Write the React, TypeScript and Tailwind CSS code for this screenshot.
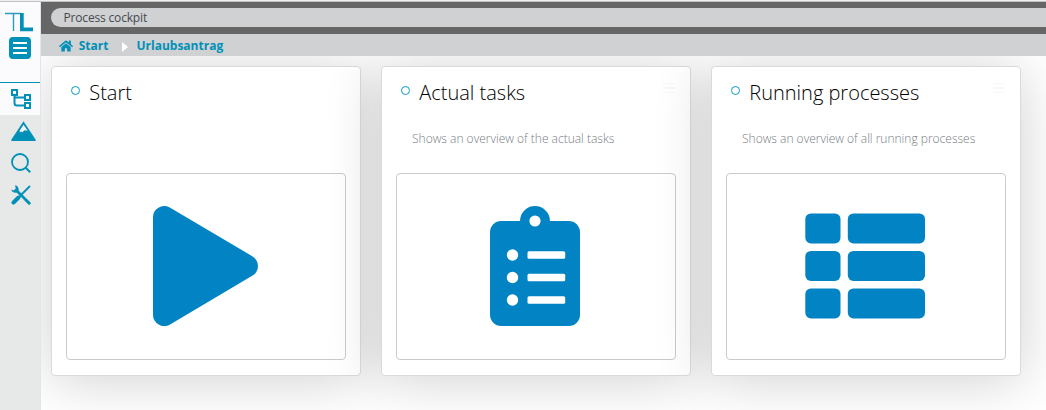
import type { ReactNode } from 'react';
import { FaHome } from 'react-icons/fa';

function Logo() {
  return (
    <svg className="h-5 w-7" viewBox="0 0 28 20">
      <path d="M0 1.5H15.5M8.5 1V19" fill="none" stroke="#2b9cbc" strokeWidth="1.4" />
      <path d="M15 1H18.7V15.5H28V19.3H15Z" fill="#0090b8" />
    </svg>
  );
}

function TreeIcon() {
  return (
    <svg className="h-5 w-[21px]" viewBox="0 0 21 20" fill="none" stroke="#0090b8" strokeWidth="2">
      <rect x="1" y="1" width="5" height="5" />
      <rect x="14" y="6" width="5" height="5" />
      <rect x="14" y="14" width="5" height="5" />
      <path d="M3.5 6V14Q3.5 16.5 6 16.5H14M3.5 8.5H14" />
    </svg>
  );
}

function MountainIcon() {
  return (
    <svg className="h-5 w-[25px]" viewBox="0 0 25 20">
      <path d="M12.5 .2L24.7 18.8Q25 20 24 20H1Q0 20 .3 18.8Z" fill="#0090b8" />
      <path d="M12.5 3.8L16.7 9.8L13.5 9.2L11 11.5L10.2 10.3L9 11.4L8.6 9.8Z" fill="#f2f5f5" />
    </svg>
  );
}

function SearchIcon() {
  return (
    <svg className="h-5 w-5" viewBox="0 0 20 20" fill="none" stroke="#0090b8" strokeWidth="1.8">
      <circle cx="9" cy="9" r="8" />
      <path d="M14.7 14.7L19.2 19.2" strokeWidth="2" />
    </svg>
  );
}

function ToolsIcon() {
  return (
    <svg className="h-5 w-5" viewBox="0 0 20 20" fill="none" stroke="#0090b8">
      <path d="M5.5 5.5L14 14" strokeWidth="2.6" />
      <path d="M14.5 14.5L18.2 18.2" strokeWidth="3" strokeLinecap="round" />
      <path d="M18.5 1.5L9 11" strokeWidth="1.8" strokeLinecap="round" />
      <path d="M7.5 12.5L2.5 17.5" strokeWidth="4" strokeLinecap="round" />
      <path d="M4 .3Q8 1 7.6 5.5L5.5 7.8Q1.2 8.2 .3 4.6L2.7 5.4L4.8 3.6Z" fill="#0090b8" stroke="none" />
    </svg>
  );
}

function PlayIcon() {
  return (
    <svg className="h-[120px] w-[105px]" viewBox="0 0 105 120" fill="#0284c4">
      <path d="M17.2 1.8A11.25 11.25 0 0 0 0 11.25V108.75A11.25 11.25 0 0 0 17.1 118.4L99.6 69.6A11.25 11.25 0 0 0 99.6 50.4Z" />
    </svg>
  );
}

function ClipboardIcon() {
  return (
    <svg className="mr-px h-[120px] w-[90px]" viewBox="0 0 90 120">
      <g fill="#0284c4">
        <rect y="15" width="90" height="105" rx="11.25" />
        <circle cx="45" cy="15" r="15" />
      </g>
      <g fill="#fff">
        <circle cx="45" cy="15" r="5.6" />
        {[49, 71.5, 94].map((y) => (
          <g key={y}>
            <circle cx="22.5" cy={y} r="5.7" />
            <rect x="37.5" y={y - 3.8} width="37.7" height="7.6" rx="1.5" />
          </g>
        ))}
      </g>
    </svg>
  );
}

function ListIcon() {
  return (
    <svg className="mr-px h-[106px] w-[120px]" viewBox="0 0 120 106" fill="#0284c4">
      {[0.4, 37.9, 75.4].map((y) => (
        <g key={y}>
          <rect x=".3" y={y} width="35.2" height="30" rx="5.6" />
          <rect x="42.8" y={y} width="77.2" height="30" rx="5.6" />
        </g>
      ))}
    </svg>
  );
}

interface CardProps {
  title: string;
  description?: string;
  menu?: boolean;
  children: ReactNode;
}

function Card({ title, description, menu, children }: CardProps) {
  return (
    <section className="flex h-[310px] w-[310px] shrink-0 flex-col rounded border border-[#dadada] bg-white px-[14px] pb-[15px] shadow-[0_4px_56px_rgba(0,0,0,0.19)]">
      <header className="flex h-[52px] items-center">
        <span className="mb-[5px] ml-[5px] mr-[9.25px] h-[9px] w-[9px] rounded-full border border-[#0b9cc4]" />
        <h2 className="text-xl font-light text-black">{title}</h2>
        {menu && (
          <span className="mb-[10px] ml-auto mr-px flex flex-col gap-[3px]">
            <i className="h-[1.5px] w-3 bg-[#f8f8f9]" />
            <i className="h-[1.5px] w-3 bg-[#f8f8f9]" />
            <i className="h-[1.5px] w-3 bg-[#f8f8f9]" />
          </span>
        )}
      </header>
      <p className="h-[54px] whitespace-nowrap pl-4 pt-[10px] text-xs leading-5 font-light text-[#777d83]">{description}</p>
      <div className="flex flex-1 items-center justify-center rounded border border-[#c9caca] pb-[2px] pr-px">{children}</div>
    </section>
  );
}

export default function App() {
  return (
    <div className="flex h-[410px] w-[1046px] flex-col overflow-hidden bg-white font-['Open_Sans','Noto_Sans',sans-serif]">
      <div className="h-[2px] shrink-0 border-b border-[#c0c4c4] bg-[#eef0f0]" />
      <div className="flex min-h-0 flex-1">
        <aside className="flex w-[41px] shrink-0 flex-col border-r border-[#e2e5e9] bg-[#e6e9e8]">
          <div className="flex h-[81px] flex-col border-b border-[#0090b8] bg-[#fbfbfe] pl-[5px] pt-[10px]">
            <Logo />
            <span className="ml-1 mt-[5px] flex h-[22px] w-[22px] flex-col items-center justify-center gap-[3px] rounded bg-[#0090b8]">
              <i className="h-[2px] w-[14px] bg-white" />
              <i className="h-[2px] w-[14px] bg-white" />
              <i className="h-[2px] w-[14px] bg-white" />
            </span>
          </div>
          <div className="flex h-8 items-center bg-[#fbfbfe] pb-px pl-[11px]"><TreeIcon /></div>
          <div className="flex h-8 items-center pl-[11px]"><MountainIcon /></div>
          <div className="flex h-8 items-center pl-[11px]"><SearchIcon /></div>
          <div className="flex h-8 items-center pl-[11px]"><ToolsIcon /></div>
        </aside>
        <main className="flex min-w-0 flex-1 flex-col">
          <div className="flex h-8 shrink-0 items-center bg-[#666] pb-px pl-[10px]">
            <div className="flex h-[19px] flex-1 items-center rounded-l-full bg-[#d0d1d2] pl-[12.5px] text-xs tracking-[-0.17px] text-[#444a50]">Process cockpit</div>
          </div>
          <nav className="flex h-[22px] shrink-0 items-center bg-[#d0d1d2] pl-[18px] pt-[2px] text-xs font-bold text-[#0090b8]">
            <FaHome className="mr-[5.75px] h-[14px] w-[14px]" />
            <span>Start</span>
            <svg className="ml-[14px] mr-2 mt-[2px] h-[10px] w-[6px]" viewBox="0 0 6 10"><path d="M0 0L6 5L0 10Z" fill="#fff" /></svg>
            <span>Urlaubsantrag</span>
          </nav>
          <div className="flex flex-1 gap-5 overflow-hidden pl-[10px] pt-[10px]">
            <Card title="Start"><PlayIcon /></Card>
            <Card title="Actual tasks" description="Shows an overview of the actual tasks" menu><ClipboardIcon /></Card>
            <Card title="Running processes" description="Shows an overview of all running processes" menu><ListIcon /></Card>
          </div>
        </main>
      </div>
    </div>
  );
}
